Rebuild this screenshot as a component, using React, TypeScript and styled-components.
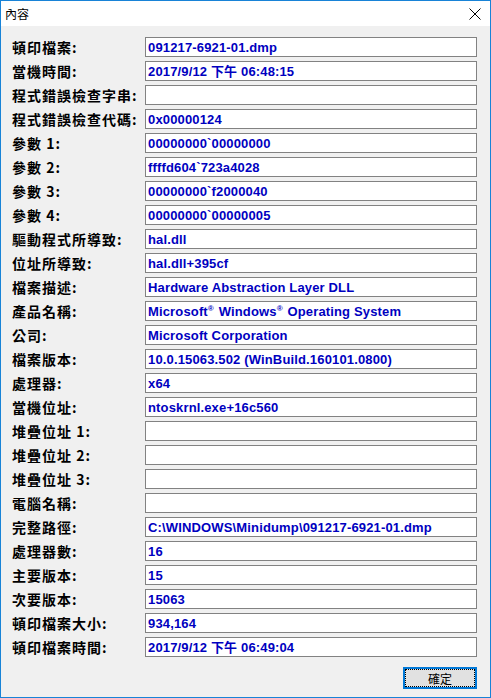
import { Fragment, type ReactNode } from "react";
import styled, { createGlobalStyle } from "styled-components";

const GlobalStyle = createGlobalStyle`
  html, body {
    margin: 0;
    padding: 0;
    background: #ffffff;
  }
  * {
    box-sizing: border-box;
  }
`;

type Field = {
  label: string;
  value?: ReactNode;
};

const Window = styled.div`
  width: 491px;
  height: 698px;
  border: 1px solid #1883d7;
  display: flex;
  flex-direction: column;
  background: #f0f0f0;
`;

const TitleBar = styled.div`
  height: 25px;
  flex: none;
  background: #ffffff;
  display: flex;
  align-items: center;
  justify-content: space-between;
  padding: 0 8px 0 4px;
`;

const Title = styled.span`
  font-family: "Noto Sans CJK TC", sans-serif;
  font-size: 12px;
  color: #000000;
`;

const CloseButton = styled.div`
  width: 14px;
  height: 14px;
  display: flex;
  align-items: center;
  justify-content: center;
  margin-top: 1px;
`;

const Body = styled.div`
  flex: 1;
  display: flex;
  flex-direction: column;
  padding: 11px 13px 0 11px;
`;

const Grid = styled.div`
  display: grid;
  grid-template-columns: 133px 332px;
  grid-auto-rows: 20px;
  row-gap: 4px;
`;

const Label = styled.div`
  font-family: "Noto Sans CJK TC", sans-serif;
  font-weight: 700;
  font-size: 14px;
  letter-spacing: 1px;
  color: #000000;
  display: flex;
  align-items: center;
  white-space: nowrap;
  line-height: 1;
`;

const Value = styled.div`
  background: #ffffff;
  border: 1px solid #828282;
  padding: 0 2px;
  font-family: "Liberation Sans", "Noto Sans CJK TC", sans-serif;
  font-weight: 700;
  font-size: 13px;
  letter-spacing: 0.15px;
  color: #0000c0;
  display: flex;
  align-items: center;
  white-space: nowrap;
  overflow: hidden;
  line-height: 1;
`;

const Reg = styled.span`
  font-size: 8px;
  align-self: flex-start;
  margin-top: 3px;
  margin-right: 1px;
`;

const Footer = styled.div`
  display: flex;
  justify-content: flex-end;
  margin-top: 10px;
`;

const OkButton = styled.button`
  width: 74px;
  height: 22px;
  background: #e1e1e1;
  border: 2px solid #0078d7;
  padding: 0;
  outline: 1px dotted #000000;
  outline-offset: -3px;
  font-family: "Noto Sans CJK TC", sans-serif;
  font-size: 12px;
  color: #000000;
  display: flex;
  align-items: center;
  justify-content: center;
`;

const fields: Field[] = [
  { label: "頓印檔案:", value: "091217-6921-01.dmp" },
  { label: "當機時間:", value: "2017/9/12 下午 06:48:15" },
  { label: "程式錯誤檢查字串:" },
  { label: "程式錯誤檢查代碼:", value: "0x00000124" },
  { label: "參數 1:", value: "00000000`00000000" },
  { label: "參數 2:", value: "ffffd604`723a4028" },
  { label: "參數 3:", value: "00000000`f2000040" },
  { label: "參數 4:", value: "00000000`00000005" },
  { label: "驅動程式所導致:", value: "hal.dll" },
  { label: "位址所導致:", value: "hal.dll+395cf" },
  { label: "檔案描述:", value: "Hardware Abstraction Layer DLL" },
  {
    label: "產品名稱:",
    value: (
      <>
        Microsoft<Reg>®</Reg>&nbsp;Windows<Reg>®</Reg>&nbsp;Operating System
      </>
    ),
  },
  { label: "公司:", value: "Microsoft Corporation" },
  { label: "檔案版本:", value: "10.0.15063.502 (WinBuild.160101.0800)" },
  { label: "處理器:", value: "x64" },
  { label: "當機位址:", value: "ntoskrnl.exe+16c560" },
  { label: "堆疊位址 1:" },
  { label: "堆疊位址 2:" },
  { label: "堆疊位址 3:" },
  { label: "電腦名稱:" },
  { label: "完整路徑:", value: "C:\\WINDOWS\\Minidump\\091217-6921-01.dmp" },
  { label: "處理器數:", value: "16" },
  { label: "主要版本:", value: "15" },
  { label: "次要版本:", value: "15063" },
  { label: "頓印檔案大小:", value: "934,164" },
  { label: "頓印檔案時間:", value: "2017/9/12 下午 06:49:04" },
];

const App = () => {
  return (
    <>
      <GlobalStyle />
      <Window>
        <TitleBar>
          <Title>內容</Title>
          <CloseButton>
            <svg width="12" height="12" viewBox="0 0 12 12">
              <path
                d="M0.5 0.5 L11.5 11.5 M11.5 0.5 L0.5 11.5"
                stroke="#000000"
                strokeWidth="1"
                fill="none"
              />
            </svg>
          </CloseButton>
        </TitleBar>
        <Body>
          <Grid>
            {fields.map((field) => (
              <Fragment key={field.label}>
                <Label>{field.label}</Label>
                <Value>{field.value}</Value>
              </Fragment>
            ))}
          </Grid>
          <Footer>
            <OkButton>確定</OkButton>
          </Footer>
        </Body>
      </Window>
    </>
  );
};

export default App;
